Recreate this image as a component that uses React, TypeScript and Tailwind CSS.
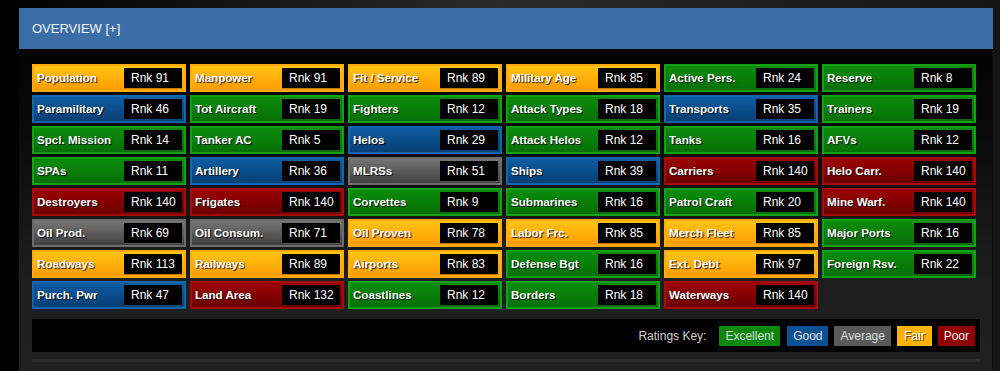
import React from "react";

type C = "o" | "g" | "b" | "r" | "y";

const rows: [string, C, number][][] = [
  [["Population", "o", 91], ["Manpower", "o", 91], ["Fit / Service", "o", 89], ["Military Age", "o", 85], ["Active Pers.", "g", 24], ["Reserve", "g", 8]],
  [["Paramilitary", "b", 46], ["Tot Aircraft", "g", 19], ["Fighters", "g", 12], ["Attack Types", "g", 18], ["Transports", "b", 35], ["Trainers", "g", 19]],
  [["Spcl. Mission", "g", 14], ["Tanker AC", "g", 5], ["Helos", "b", 29], ["Attack Helos", "g", 12], ["Tanks", "g", 16], ["AFVs", "g", 12]],
  [["SPAs", "g", 11], ["Artillery", "b", 36], ["MLRSs", "y", 51], ["Ships", "b", 39], ["Carriers", "r", 140], ["Helo Carr.", "r", 140]],
  [["Destroyers", "r", 140], ["Frigates", "r", 140], ["Corvettes", "g", 9], ["Submarines", "g", 16], ["Patrol Craft", "g", 20], ["Mine Warf.", "r", 140]],
  [["Oil Prod.", "y", 69], ["Oil Consum.", "y", 71], ["Oil Proven", "o", 78], ["Labor Frc.", "o", 85], ["Merch Fleet", "o", 85], ["Major Ports", "g", 16]],
  [["Roadways", "o", 113], ["Railways", "o", 89], ["Airports", "o", 83], ["Defense Bgt", "g", 16], ["Ext. Debt", "o", 97], ["Foreign Rsv.", "g", 22]],
  [["Purch. Pwr", "b", 47], ["Land Area", "r", 132], ["Coastlines", "g", 12], ["Borders", "g", 18], ["Waterways", "r", 140]],
];

const cardCls: Record<C, string> = {
  o: "border-[#ffac0a] bg-[linear-gradient(to_bottom,#ffc414,#ff9c00)]",
  g: "border-[#14a014] bg-[linear-gradient(to_bottom,#0b8c0b,#067006)]",
  b: "border-[#1464ac] bg-[linear-gradient(to_bottom,#0d5ca2,#073f74)]",
  r: "border-[#a40c0c] bg-[linear-gradient(to_bottom,#9c0202,#6c0000)]",
  y: "border-[#6c6c6c] bg-[linear-gradient(to_bottom,#757575,#404040)]",
};

const rankBorder: Record<C, string> = {
  o: "border-[#c77a00]",
  g: "border-[#0d6a0d]",
  b: "border-[#0a4a85]",
  r: "border-[#7a0505]",
  y: "border-[#555]",
};

function Card({ label, c, rank }: { label: string; c: C; rank: number }) {
  return (
    <div
      className={`w-[154px] h-[28px] mr-[4px] mb-[3px] border-2 flex items-center justify-between pl-[3px] pr-[2px] ${cardCls[c]}`}
    >
      <span className="text-white font-bold text-[11.6px] leading-none whitespace-nowrap [text-shadow:1px_1px_1px_rgba(0,0,0,0.85)]">
        {label}
      </span>
      <span
        className={`w-[58px] h-[21px] bg-black border-b text-white text-[12px] leading-none flex items-center pl-[7px] ${rankBorder[c]}`}
      >
        Rnk {rank}
      </span>
    </div>
  );
}

export default function App() {
  return (
    <div
      className="w-[1000px] h-[371px] overflow-hidden pt-[8px] pl-[19px] bg-[linear-gradient(to_right,#000_0%,#2a2a2a_50%,#141414_100%)]"
      style={{ fontFamily: '"Liberation Sans", Arial, sans-serif' }}
    >
      <div className="w-[974px]">
        <div className="h-[41px] bg-[#3b6ea6] flex items-center pl-[13px] text-[13px] text-[#f2f2f2]">
          OVERVIEW [+]
        </div>
        <div className="h-[330px] border-r border-[#0c0c0c] bg-[linear-gradient(to_bottom,#020202_0%,#0a0a0a_25%,#1e1e1e_70%,#202020_100%)] px-[13px] pt-[15px]">
          <div className="w-[948px] flex flex-wrap">
            {rows.flat().map(([l, c, r], i) => (
              <Card key={i} label={l} c={c} rank={r} />
            ))}
          </div>
          <div className="mt-[7px] h-[33px] w-[948px] bg-black flex items-center justify-end pr-[5px] text-[12px]">
            <span className="text-[#cfcfcf] mr-[13px]">Ratings Key:</span>
            <span className="h-[20px] px-[6px] flex items-center bg-[#0b870b] text-[#dcdcdc] mr-[7px]">Excellent</span>
            <span className="h-[20px] px-[6px] flex items-center bg-[#0a5191] text-[#e6e6e6] mr-[6px]">Good</span>
            <span className="h-[20px] px-[6px] flex items-center bg-[#5a5a5a] text-[#dcdcdc] mr-[6px]">Average</span>
            <span className="h-[20px] px-[7px] flex items-center bg-[#ffb300] text-white mr-[6px] [text-shadow:1px_1px_1px_rgba(0,0,0,0.7)]">Fair</span>
            <span className="h-[20px] px-[6px] flex items-center bg-[#8f0000] text-[#eeeeee]">Poor</span>
          </div>
          <div className="mt-[7px] h-[3px] w-[948px] bg-[#2c2c2c]" />
        </div>
      </div>
    </div>
  );
}
